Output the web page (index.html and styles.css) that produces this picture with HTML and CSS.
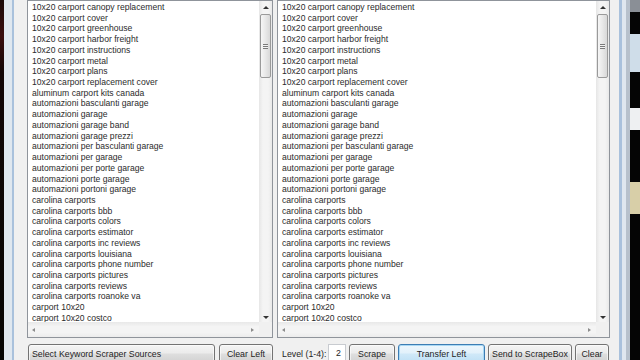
FILE: index.html
```html
<!DOCTYPE html>
<html lang="en">
  <head>
    <meta charset="UTF-8" />
    <title>Keyword Scraper</title>
    <link rel="stylesheet" href="styles.css">
  </head>
  <body>
    <div class="screen">
      <div class="edge-left"></div>
      <div class="window">
        <div class="client">
          <!-- Both lists -->
          <div class="panes">
            <div class="listbox left">
              <ul class="items">
                <li>10x20 carport canopy replacement</li>
                <li>10x20 carport cover</li>
                <li>10x20 carport greenhouse</li>
                <li>10x20 carport harbor freight</li>
                <li>10x20 carport instructions</li>
                <li>10x20 carport metal</li>
                <li>10x20 carport plans</li>
                <li>10x20 carport replacement cover</li>
                <li>aluminum carport kits canada</li>
                <li>automazioni basculanti garage</li>
                <li>automazioni garage</li>
                <li>automazioni garage band</li>
                <li>automazioni garage prezzi</li>
                <li>automazioni per basculanti garage</li>
                <li>automazioni per garage</li>
                <li>automazioni per porte garage</li>
                <li>automazioni porte garage</li>
                <li>automazioni portoni garage</li>
                <li>carolina carports</li>
                <li>carolina carports bbb</li>
                <li>carolina carports colors</li>
                <li>carolina carports estimator</li>
                <li>carolina carports inc reviews</li>
                <li>carolina carports louisiana</li>
                <li>carolina carports phone number</li>
                <li>carolina carports pictures</li>
                <li>carolina carports reviews</li>
                <li>carolina carports roanoke va</li>
                <li>carport 10x20</li>
                <li>carport 10x20 costco</li>
              </ul>
              <div class="vscroll">
                <div class="sbtn up"><span class="arrow-up"></span></div>
                <div class="thumb"><span class="grip"></span></div>
                <div class="track"></div>
                <div class="sbtn down"><span class="arrow-down"></span></div>
              </div>
              <div class="hscroll">
                <span class="arrow-left"></span>
                <span class="arrow-right"></span>
              </div>
              <div class="corner"></div>
            </div>
            <div class="listbox right">
              <ul class="items">
                <li>10x20 carport canopy replacement</li>
                <li>10x20 carport cover</li>
                <li>10x20 carport greenhouse</li>
                <li>10x20 carport harbor freight</li>
                <li>10x20 carport instructions</li>
                <li>10x20 carport metal</li>
                <li>10x20 carport plans</li>
                <li>10x20 carport replacement cover</li>
                <li>aluminum carport kits canada</li>
                <li>automazioni basculanti garage</li>
                <li>automazioni garage</li>
                <li>automazioni garage band</li>
                <li>automazioni garage prezzi</li>
                <li>automazioni per basculanti garage</li>
                <li>automazioni per garage</li>
                <li>automazioni per porte garage</li>
                <li>automazioni porte garage</li>
                <li>automazioni portoni garage</li>
                <li>carolina carports</li>
                <li>carolina carports bbb</li>
                <li>carolina carports colors</li>
                <li>carolina carports estimator</li>
                <li>carolina carports inc reviews</li>
                <li>carolina carports louisiana</li>
                <li>carolina carports phone number</li>
                <li>carolina carports pictures</li>
                <li>carolina carports reviews</li>
                <li>carolina carports roanoke va</li>
                <li>carport 10x20</li>
                <li>carport 10x20 costco</li>
              </ul>
              <div class="vscroll">
                <div class="sbtn up"><span class="arrow-up"></span></div>
                <div class="thumb"><span class="grip"></span></div>
                <div class="track"></div>
                <div class="sbtn down"><span class="arrow-down"></span></div>
              </div>
              <div class="hscroll">
                <span class="arrow-left"></span>
                <span class="arrow-right"></span>
              </div>
              <div class="corner"></div>
            </div>
          </div>

          <!-- Button rows -->
          <div class="toolbar">
            <div class="tools-left">
              <button class="btn btn-sources">Select Keyword Scraper Sources</button>
              <button class="btn btn-clear-left">Clear Left</button>
            </div>
            <div class="tools-right">
              <span class="level-label">Level (1-4):</span>
              <div class="level-input">2</div>
              <button class="btn btn-scrape">Scrape</button>
              <button class="btn btn-transfer">Transfer Left</button>
              <button class="btn btn-send">Send to ScrapeBox</button>
              <button class="btn btn-clear">Clear</button>
            </div>
          </div>
        </div>
      </div>
      <div class="edge-right">
        <div class="patch gray"></div>
        <div class="patch black"></div>
        <div class="patch light"></div>
        <div class="patch black tall"></div>
        <div class="patch white"></div>
        <div class="patch black mid"></div>
        <div class="patch photo"></div>
        <div class="patch black rest"></div>
      </div>
    </div>
  </body>
</html>
```

FILE: styles.css
```css
html, body {
  margin: 0;
  padding: 0;
  background: #000;
}
body {
  font-family: "Liberation Sans", Arial, sans-serif;
  width: 640px;
  height: 360px;
  overflow: hidden;
}
.screen {
  display: flex;
  width: 640px;
  height: 360px;
}
.edge-left {
  width: 4px;
  background: linear-gradient(#1a0a0a, #3a0d0d 10%, #120606 20%, #050505);
}
.window {
  width: 622px;
  background: #dfe7ef;
  padding: 0 4px 0 8px;
  box-sizing: border-box;
}
.client {
  height: 360px;
  border-left: 2px solid #a9c1dc;
  border-right: 3px solid #a9c1dc;
  background: #f0f0f0;
  padding: 0 9px 0 13px;
  box-sizing: border-box;
}
.panes {
  display: flex;
  gap: 4px;
  height: 338px;
}
.listbox {
  display: grid;
  grid-template-columns: 1fr 13px;
  grid-template-rows: 1fr 15px;
  border: 1px solid #8f949b;
  background: #fff;
  box-sizing: border-box;
  height: 338px;
}
.listbox.left {
  width: 246px;
}
.listbox.right {
  width: 333px;
}
.items {
  list-style: none;
  margin: 0;
  padding: 1px 0 0 4px;
  overflow: hidden;
  font-size: 8.6px;
  line-height: 10.72px;
  color: #2b2b2b;
  white-space: nowrap;
}

/* Scrollbars */
.vscroll {
  display: flex;
  flex-direction: column;
  background: linear-gradient(to right, #e6e6e6, #f4f4f4 30%, #f4f4f4 70%, #e9e9e9);
}
.sbtn {
  height: 13px;
  display: flex;
  justify-content: center;
}
.sbtn.up {
  align-items: center;
}
.sbtn.down {
  align-items: flex-end;
  padding-bottom: 1px;
}
.thumb {
  height: 62px;
  margin: 0 1px;
  border: 1px solid #9a9a9a;
  border-radius: 2px;
  background: linear-gradient(to right, #f6f6f6, #e8e8e8 50%, #d8d8d8);
  display: flex;
  align-items: center;
  justify-content: center;
}
.grip {
  width: 5px;
  height: 5px;
  border-top: 1px solid #7a7a7a;
  border-bottom: 1px solid #7a7a7a;
  box-sizing: border-box;
  background: linear-gradient(#f3f3f3 1px, #7a7a7a 1px, #7a7a7a 2px, #f3f3f3 2px);
}
.track {
  flex: 1;
}
.arrow-up, .arrow-down, .arrow-left, .arrow-right {
  width: 0;
  height: 0;
  border: 3px solid transparent;
}
.arrow-up {
  border-bottom-color: #333;
  border-top-width: 0;
}
.arrow-down {
  border-top-color: #333;
  border-bottom-width: 0;
  margin-bottom: 2px;
}
.hscroll {
  display: flex;
  align-items: center;
  justify-content: space-between;
  padding: 0 5px 0 4px;
  background: linear-gradient(#e8e8e8, #f4f4f4 30%, #f4f4f4 70%, #ececec);
}
.arrow-left {
  border-right-color: #8c8c8c;
  border-left-width: 0;
  border-width: 2px 3px 2px 0;
}
.arrow-right {
  border-left-color: #8c8c8c;
  border-width: 2px 0 2px 3px;
}
.corner {
  background: #f0f0f0;
}

/* Buttons */
.toolbar {
  display: flex;
  gap: 4px;
  margin-top: 6px;
}
.tools-left {
  display: flex;
  gap: 4px;
  width: 246px;
  padding-left: 1px;
  box-sizing: border-box;
}
.tools-right {
  display: flex;
  align-items: center;
  gap: 3px;
  padding-left: 5px;
  height: 19px;
}
.btn {
  height: 19px;
  padding: 0;
  font-family: "Liberation Sans", Arial, sans-serif;
  font-size: 8.8px;
  color: #1e1e1e;
  border: 1px solid #737373;
  border-radius: 3px;
  background: linear-gradient(#f4f4f4, #ececec 45%, #dedede 55%, #d2d2d2);
  box-shadow: inset 0 0 0 1px rgba(255, 255, 255, 0.6);
}
.btn-sources {
  width: 187px;
  text-align: left;
  padding-left: 3px;
}
.btn-clear-left {
  width: 54px;
}
.level-label {
  width: 43px;
  font-size: 8.8px;
  color: #1e1e1e;
  white-space: nowrap;
}
.level-input {
  width: 18px;
  height: 19px;
  background: #fff;
  border: 1px solid #c8cbd0;
  border-bottom: none;
  box-sizing: border-box;
  font-size: 8.8px;
  text-align: right;
  padding: 3px 4px 0 0;
  color: #1e1e1e;
}
.btn-scrape {
  width: 46px;
}
.btn-transfer {
  width: 87px;
  border-color: #3d7db4;
  background: linear-gradient(#eef7fd, #e2f1fb 45%, #cfe8f8 55%, #bfe0f5);
  box-shadow: inset 0 0 0 1px #a9d8f4;
}
.btn-send {
  width: 84px;
}
.btn-clear {
  width: 34px;
}

/* Desktop edge on the right */
.edge-right {
  width: 14px;
  display: flex;
  flex-direction: column;
  background: #000;
  border-left: 4px solid #b7c1cc;
  box-sizing: border-box;
}
.patch.gray {
  height: 12px;
  background: #8a8f96;
}
.patch.black {
  height: 22px;
  background: #050505;
}
.patch.light {
  height: 38px;
  background: #cfdde9;
}
.patch.tall {
  height: 36px;
}
.patch.white {
  height: 22px;
  background: #eef0f2;
}
.patch.mid {
  height: 52px;
}
.patch.photo {
  height: 32px;
  background: #d8cfa8;
}
.patch.rest {
  flex: 1;
}
```
